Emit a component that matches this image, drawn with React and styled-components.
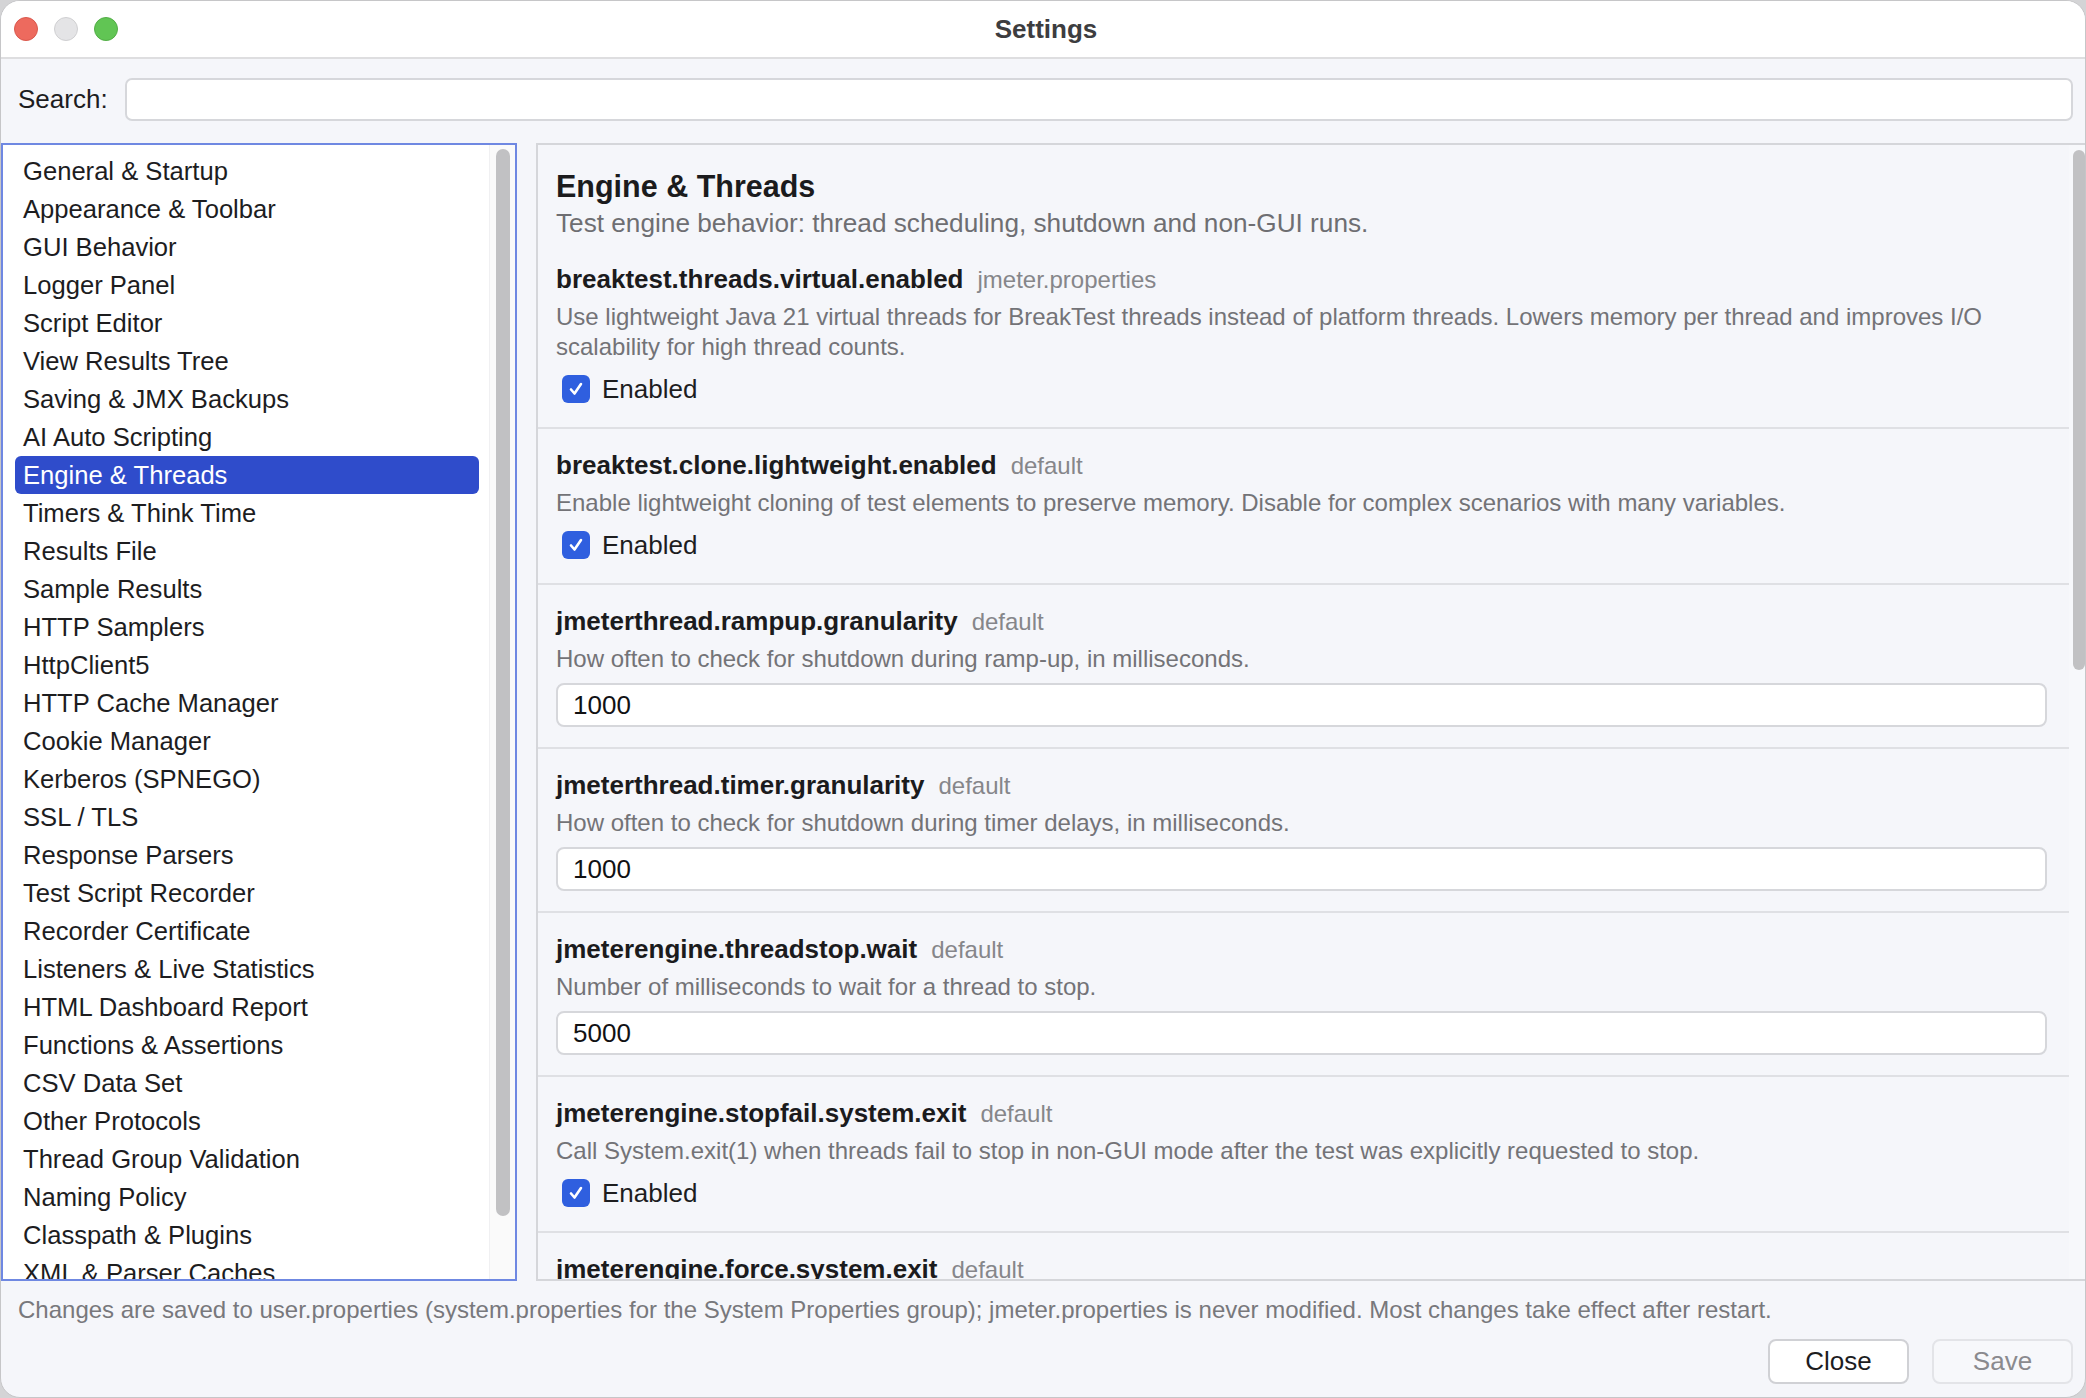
import React from "react";
import styled, { createGlobalStyle } from "styled-components";

const GlobalStyle = createGlobalStyle`
  html, body {
    margin: 0;
    padding: 0;
    background: #d4d4d6;
  }
  body {
    font-family: "Liberation Sans", Arial, sans-serif;
  }
  * {
    box-sizing: border-box;
  }
`;

const Window = styled.div`
  width: 2086px;
  height: 1398px;
  border-radius: 20px;
  border: 1px solid #c6c6c8;
  overflow: hidden;
  background: #f5f6fa;
  display: flex;
  flex-direction: column;
`;

const TitleBar = styled.div`
  height: 58px;
  flex-shrink: 0;
  background: #ffffff;
  border-bottom: 2px solid #dedee0;
  display: grid;
  grid-template-columns: 1fr auto 1fr;
  align-items: center;
  padding-left: 6px;
`;

const Lights = styled.div`
  display: flex;
  gap: 16px;
  padding-left: 7px;
`;

const Light = styled.span`
  width: 24px;
  height: 24px;
  border-radius: 50%;
  background: ${(p) => p.$color};
  border: 1px solid ${(p) => p.$edge};
`;

const Title = styled.div`
  font-size: 26px;
  font-weight: 700;
  color: #3d3d3f;
`;

const SearchRow = styled.div`
  display: flex;
  align-items: center;
  gap: 17px;
  padding: 19px 12px 0 17px;
`;

const SearchLabel = styled.label`
  font-size: 26px;
  color: #1d1d1f;
`;

const SearchInput = styled.div`
  flex: 1;
  height: 43px;
  background: #ffffff;
  border: 2px solid #d6d7db;
  border-radius: 7px;
`;

const Main = styled.div`
  display: flex;
  gap: 19px;
  margin-top: 22px;
  height: 1138px;
  flex-shrink: 0;
`;

const ListPanel = styled.div`
  width: 516px;
  flex-shrink: 0;
  background: #ffffff;
  border: 2px solid #6f88e2;
  display: flex;
  overflow: hidden;
`;

const Items = styled.div`
  flex: 1;
  padding: 7px 10px 0 12px;
  overflow: hidden;
`;

const Item = styled.div`
  height: 38px;
  line-height: 38px;
  padding-left: 8px;
  border-radius: 6px;
  font-size: 25.6px;
  white-space: nowrap;
  color: ${(p) => (p.$active ? "#ffffff" : "#1d1d1f")};
  background: ${(p) => (p.$active ? "#2f4ccb" : "transparent")};
`;

const Track = styled.div`
  width: 26px;
  flex-shrink: 0;
  background: #fafafa;
  border-left: 1px solid #f0f0f2;
  padding: 4px 0 0 6px;
`;

const Thumb = styled.div`
  width: ${(p) => p.$w}px;
  height: ${(p) => p.$h}px;
  border-radius: 7px;
  background: #c1c1c3;
`;

const DetailPanel = styled.div`
  flex: 1;
  display: flex;
  border-top: 2px solid #d5d6da;
  border-left: 2px solid #d5d6da;
  border-bottom: 2px solid #d5d6da;
  background: #f5f6fa;
  overflow: hidden;
`;

const Content = styled.div`
  flex: 1;
  overflow: hidden;
`;

const SideTrack = styled.div`
  width: 16px;
  flex-shrink: 0;
  padding: 5px 0 0 4px;
  background: #f7f8fb;
`;

const Header = styled.div`
  padding: 23px 20px 5px 18px;
`;

const Heading = styled.h2`
  margin: 0;
  font-size: 30.5px;
  line-height: 36px;
  font-weight: 700;
  color: #1b1b1d;
`;

const Subtitle = styled.p`
  margin: 4px 0 0;
  font-size: 26.2px;
  line-height: 30px;
  color: #6e6e72;
`;

const Section = styled.div`
  padding: 20px 22px 20px 18px;
  border-bottom: 2px solid #dfe0e4;
`;

const NameLine = styled.div`
  display: flex;
  align-items: baseline;
  height: 32px;
  line-height: 32px;
  white-space: nowrap;
`;

const PropName = styled.span`
  font-size: 26px;
  font-weight: 700;
  color: #1b1b1d;
`;

const Source = styled.span`
  margin-left: 14px;
  font-size: 24px;
  color: #86868a;
`;

const Desc = styled.p`
  margin: 7px 0 0;
  font-size: 24px;
  line-height: 30px;
  color: #737377;
`;

const CheckRow = styled.label`
  display: flex;
  align-items: center;
  height: 36px;
  margin-top: 9px;
  padding-left: 6px;
  gap: 12px;
  font-size: 26px;
  color: #1d1d1f;
`;

const Box = styled.span`
  width: 28px;
  height: 28px;
  border-radius: 6px;
  background: #2f5fdf;
  display: flex;
  align-items: center;
  justify-content: center;
`;

const ValueInput = styled.input`
  display: block;
  width: 100%;
  height: 44px;
  margin-top: 9px;
  padding: 0 15px;
  background: #ffffff;
  border: 2px solid #d6d7db;
  border-radius: 8px;
  font-family: "Liberation Sans", Arial, sans-serif;
  font-size: 26px;
  color: #111113;
  outline: none;
`;

const Footer = styled.div`
  padding: 14px 12px 0 17px;
`;

const Note = styled.p`
  margin: 0;
  font-size: 24px;
  line-height: 30px;
  color: #78787c;
  white-space: nowrap;
`;

const Buttons = styled.div`
  display: flex;
  justify-content: flex-end;
  gap: 23px;
  margin-top: 14px;
`;

const Button = styled.button`
  width: 141px;
  height: 45px;
  border-radius: 8px;
  font-family: "Liberation Sans", Arial, sans-serif;
  font-size: 26px;
  background: ${(p) => (p.disabled ? "#f7f8fb" : "#ffffff")};
  color: ${(p) => (p.disabled ? "#8a8a8e" : "#1d1d1f")};
  border: 2px solid ${(p) => (p.disabled ? "#e3e4e8" : "#d0d1d5")};
`;

const categories = [
  "General & Startup",
  "Appearance & Toolbar",
  "GUI Behavior",
  "Logger Panel",
  "Script Editor",
  "View Results Tree",
  "Saving & JMX Backups",
  "AI Auto Scripting",
  "Engine & Threads",
  "Timers & Think Time",
  "Results File",
  "Sample Results",
  "HTTP Samplers",
  "HttpClient5",
  "HTTP Cache Manager",
  "Cookie Manager",
  "Kerberos (SPNEGO)",
  "SSL / TLS",
  "Response Parsers",
  "Test Script Recorder",
  "Recorder Certificate",
  "Listeners & Live Statistics",
  "HTML Dashboard Report",
  "Functions & Assertions",
  "CSV Data Set",
  "Other Protocols",
  "Thread Group Validation",
  "Naming Policy",
  "Classpath & Plugins",
  "XML & Parser Caches",
];

const settings = [
  {
    name: "breaktest.threads.virtual.enabled",
    source: "jmeter.properties",
    desc: "Use lightweight Java 21 virtual threads for BreakTest threads instead of platform threads. Lowers memory per thread and improves I/O scalability for high thread counts.",
    check: true,
  },
  {
    name: "breaktest.clone.lightweight.enabled",
    source: "default",
    desc: "Enable lightweight cloning of test elements to preserve memory. Disable for complex scenarios with many variables.",
    check: true,
  },
  {
    name: "jmeterthread.rampup.granularity",
    source: "default",
    desc: "How often to check for shutdown during ramp-up, in milliseconds.",
    value: "1000",
  },
  {
    name: "jmeterthread.timer.granularity",
    source: "default",
    desc: "How often to check for shutdown during timer delays, in milliseconds.",
    value: "1000",
  },
  {
    name: "jmeterengine.threadstop.wait",
    source: "default",
    desc: "Number of milliseconds to wait for a thread to stop.",
    value: "5000",
  },
  {
    name: "jmeterengine.stopfail.system.exit",
    source: "default",
    desc: "Call System.exit(1) when threads fail to stop in non-GUI mode after the test was explicitly requested to stop.",
    check: true,
  },
  {
    name: "jmeterengine.force.system.exit",
    source: "default",
  },
];

const Check = () => (
  <Box>
    <svg width="18" height="18" viewBox="0 0 18 18">
      <path
        d="M4 9.5 L7.5 13.5 L14 4"
        fill="none"
        stroke="#ffffff"
        strokeWidth="2.6"
        strokeLinecap="round"
        strokeLinejoin="round"
      />
    </svg>
  </Box>
);

const Setting = ({ item }) => (
  <Section>
    <NameLine>
      <PropName>{item.name}</PropName>
      <Source>{item.source}</Source>
    </NameLine>
    {item.desc && <Desc>{item.desc}</Desc>}
    {item.value !== undefined && <ValueInput readOnly value={item.value} />}
    {item.check && (
      <CheckRow>
        <Check />
        Enabled
      </CheckRow>
    )}
  </Section>
);

export default function App() {
  return (
    <>
      <GlobalStyle />
      <Window>
        <TitleBar>
          <Lights>
            <Light $color="#ed6a5e" $edge="#d9584d" />
            <Light $color="#e4e4e6" $edge="#cfcfd1" />
            <Light $color="#61c554" $edge="#52ad46" />
          </Lights>
          <Title>Settings</Title>
          <div />
        </TitleBar>

        <SearchRow>
          <SearchLabel>Search:</SearchLabel>
          <SearchInput />
        </SearchRow>

        <Main>
          <ListPanel>
            <Items>
              {categories.map((c) => (
                <Item key={c} $active={c === "Engine & Threads"}>
                  {c}
                </Item>
              ))}
            </Items>
            <Track>
              <Thumb $w={14} $h={1067} />
            </Track>
          </ListPanel>

          <DetailPanel>
            <Content>
              <Header>
                <Heading>Engine &amp; Threads</Heading>
                <Subtitle>
                  Test engine behavior: thread scheduling, shutdown and non-GUI runs.
                </Subtitle>
              </Header>
              {settings.map((s) => (
                <Setting key={s.name} item={s} />
              ))}
            </Content>
            <SideTrack>
              <Thumb $w={12} $h={520} />
            </SideTrack>
          </DetailPanel>
        </Main>

        <Footer>
          <Note>
            Changes are saved to user.properties (system.properties for the System Properties
            group); jmeter.properties is never modified. Most changes take effect after restart.
          </Note>
          <Buttons>
            <Button>Close</Button>
            <Button disabled>Save</Button>
          </Buttons>
        </Footer>
      </Window>
    </>
  );
}
